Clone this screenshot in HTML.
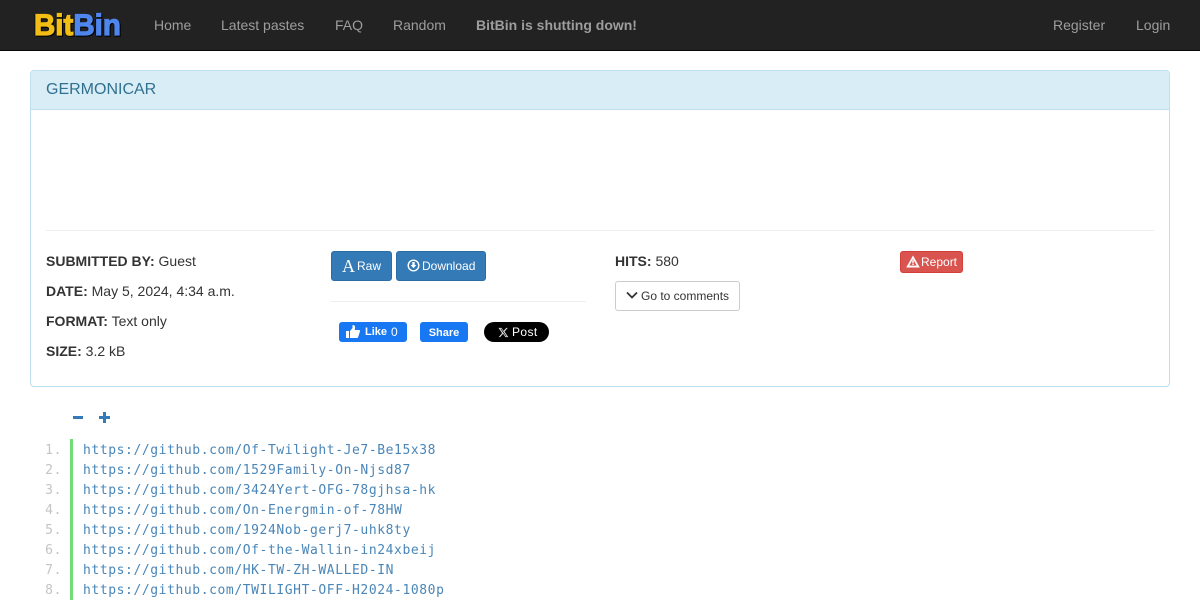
<!DOCTYPE html>
<html><head><meta charset="utf-8"><title>GERMONICAR</title>
<style>
*{box-sizing:border-box}
html,body{margin:0;padding:0;width:1200px;height:600px;overflow:hidden;background:#fff;font-family:"Liberation Sans",Arial,sans-serif;font-size:14px;color:#333}
.abs{position:absolute;white-space:nowrap}
#nav{position:absolute;left:0;top:0;width:1200px;height:51px;background:#222;border-bottom:1px solid #080808}
#nav a{position:absolute;top:17px;line-height:16px;color:#9d9d9d;font-size:14px;white-space:nowrap}
#logo{position:absolute;left:34px;top:9px;font:bold 29.500px/33px "Liberation Sans",sans-serif;white-space:nowrap;filter:drop-shadow(1px 1px 0 #000) drop-shadow(-1px 0 0 #111)}
#logo .a{color:#f2bd14;-webkit-text-stroke:1.200px #f2bd14}
#logo .b{color:#4f86ee;-webkit-text-stroke:1.200px #4f86ee}
#panel{position:absolute;left:30px;top:70px;width:1140px;height:317px;border:1px solid #bcdff1;border-radius:4px}
#ph{height:39px;background:#d9edf7;border-bottom:1px solid #bcdff1;color:#31708f;font-size:16px;line-height:37px;padding-left:15px;border-radius:3px 3px 0 0}
.hr{position:absolute;height:1px;background:#eee}
.t{position:absolute;white-space:nowrap;line-height:20px;font-size:14px;color:#333}
.btn{position:absolute;border-radius:3px;font-size:12px;white-space:nowrap}
.blue{background:#337ab7;border:1px solid #2e6da4;color:#fff;height:30px;line-height:28px}
.btn svg{position:absolute}
.code{position:absolute;left:83px;font:13px/20px "DejaVu Sans Mono",monospace;letter-spacing:.580px;color:#4a86b8;white-space:nowrap}
.n{position:absolute;left:40px;width:22px;text-align:right;font:13px/20px "DejaVu Sans Mono",monospace;letter-spacing:.580px;color:#c4c4c4;white-space:nowrap}
</style></head><body>
<div id="nav">
<div id="logo"><span class="a">Bit</span><span class="b">Bin</span></div>
<a style="left:154px">Home</a><a style="left:221px">Latest pastes</a><a style="left:335px">FAQ</a><a style="left:393px">Random</a><a style="left:476px"><b>BitBin is shutting down!</b></a><a style="left:1053px">Register</a><a style="left:1136px">Login</a>
</div>
<div id="panel"><div id="ph">GERMONICAR</div></div>
<div class="hr" style="left:46px;top:230px;width:1108px"></div>
<div class="t" style="left:46px;top:251px"><b>SUBMITTED BY:</b> Guest</div>
<div class="t" style="left:46px;top:281px"><b>DATE:</b> May 5, 2024, 4:34 a.m.</div>
<div class="t" style="left:46px;top:311px"><b>FORMAT:</b> Text only</div>
<div class="t" style="left:46px;top:341px"><b>SIZE:</b> 3.2 kB</div>

<div class="btn blue" style="left:331px;top:251px;width:61px;padding-left:25px">Raw
<span class="abs" style="left:10px;top:0;font:18px/28px 'Liberation Serif',serif">A</span></div>
<div class="btn blue" style="left:396px;top:251px;width:90px;padding-left:25px">Download
<svg style="left:10px;top:7px" width="13" height="13" viewBox="0 0 13 13"><circle cx="6.500" cy="6.500" r="5.300" fill="none" stroke="#fff" stroke-width="1.400"/><path d="M5.300 3h2.400v3h1.700L6.500 9.200 3.600 6h1.700z" fill="#fff"/></svg></div>
<div class="hr" style="left:331px;top:301px;width:255px"></div>

<div class="abs" style="left:339px;top:322px;width:68px;height:20px;background:#1877f2;border-radius:3px;color:#fff;font-size:12px;line-height:20px"><svg class="abs" style="left:7px;top:3px" width="14" height="13" viewBox="0 0 14 13"><path d="M0 6h3v7H0zM4 6l2.500-3V0c1.800 0 2.800 1 2.600 2.500L8.800 5H13c1 0 1.200 1 .9 1.800L12.200 12c-.3.700-.8 1-1.500 1H4z" fill="#fff"/></svg><b style="position:absolute;left:26px;top:0;font-size:11px">Like</b><span style="position:absolute;left:52px;top:0">0</span></div>
<div class="abs" style="left:420px;top:322px;width:48px;height:20px;background:#1877f2;border-radius:3px;color:#fff;font:bold 11px/23px 'Liberation Sans',sans-serif;text-align:center">Share</div>
<div class="abs" style="left:484px;top:322px;width:65px;height:20px;background:#000;border-radius:10px;color:#fff;font-size:12px;line-height:20px"><svg class="abs" style="left:14px;top:5px" width="11" height="11" viewBox="0 0 24 24"><path d="M18.200 2h3l-6.900 8 8.200 12h-6.300l-5-7.200L4.600 22H1.500l7.400-8.600L1 2h6.500l4.500 6.500zM17.200 20.200h1.700L6.900 3.800H5z" fill="#ddd"/></svg><span style="position:absolute;left:28px;top:0;letter-spacing:.400px">Post</span></div>

<div class="t" style="left:615px;top:251px"><b>HITS:</b> 580</div>
<div class="btn" style="left:615px;top:281px;width:125px;height:30px;background:#fff;border:1px solid #ccc;color:#333;line-height:28px;padding-left:25px">Go to comments
<svg style="left:10px;top:8px" width="12" height="10" viewBox="0 0 12 10"><path d="M1 2.500l5 5 5-5" fill="none" stroke="#333" stroke-width="1.800"/></svg></div>
<div class="btn" style="left:900px;top:251px;width:63px;height:22px;background:#d9534f;border:1px solid #d43f3a;color:#fff;font-size:12px;line-height:20px;padding-left:20px">Report
<svg style="left:5px;top:3px" width="14" height="13" viewBox="0 0 14 13"><path fill-rule="evenodd" d="M7 .5l6.800 12H.2zM7 4L3.300 10.600h7.400zM6.300 5.300h1.400v2.900H6.300zM6.300 8.700h1.400v1.300H6.300z" fill="#fff"/></svg></div>

<div class="abs" style="left:73px;top:416px;width:10px;height:3px;background:#337ab7"></div>
<svg class="abs" style="left:99px;top:412px" width="11" height="11" viewBox="0 0 11 11"><path d="M4 0h3v4h4v3H7v4H4V7H0V4h4z" fill="#337ab7"/></svg>

<div class="abs" style="left:70px;top:439px;width:3px;height:161px;background:#74dc74"></div>
<div class="n" style="top:441px">1.</div><div class="code" style="top:441px">https://github.com/Of-Twilight-Je7-Be15x38</div>
<div class="n" style="top:461px">2.</div><div class="code" style="top:461px">https://github.com/1529Family-On-Njsd87</div>
<div class="n" style="top:481px">3.</div><div class="code" style="top:481px">https://github.com/3424Yert-OFG-78gjhsa-hk</div>
<div class="n" style="top:501px">4.</div><div class="code" style="top:501px">https://github.com/On-Energmin-of-78HW</div>
<div class="n" style="top:521px">5.</div><div class="code" style="top:521px">https://github.com/1924Nob-gerj7-uhk8ty</div>
<div class="n" style="top:541px">6.</div><div class="code" style="top:541px">https://github.com/Of-the-Wallin-in24xbeij</div>
<div class="n" style="top:561px">7.</div><div class="code" style="top:561px">https://github.com/HK-TW-ZH-WALLED-IN</div>
<div class="n" style="top:581px">8.</div><div class="code" style="top:581px">https://github.com/TWILIGHT-OFF-H2024-1080p</div>
</body></html>
